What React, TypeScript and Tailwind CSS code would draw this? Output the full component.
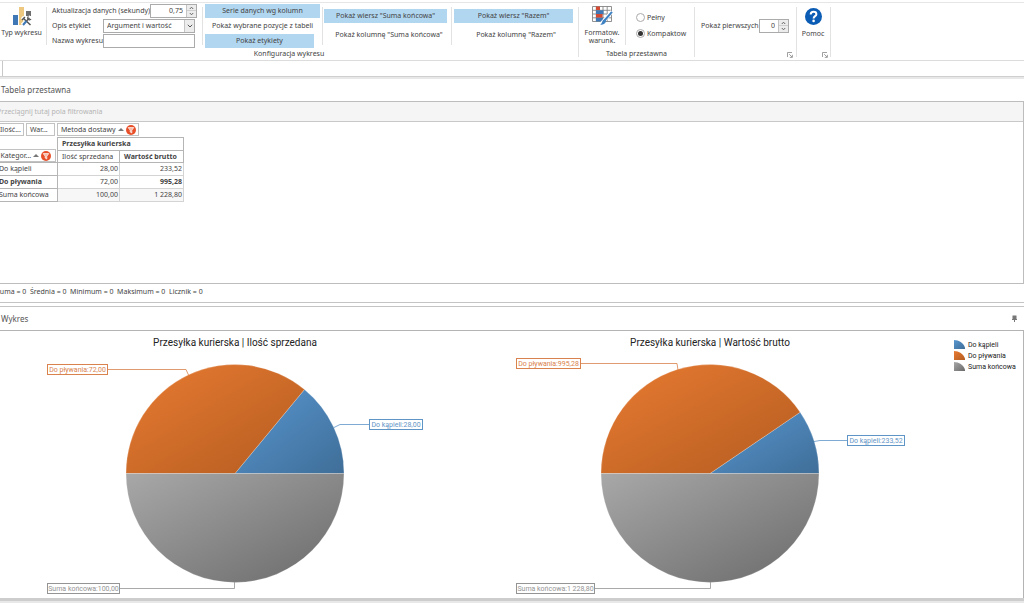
import { ReactNode, useState } from "react";

type Slice = { name: string; value: number; fill: string };

type Callout = {
  text: string;
  color: string;
  x: number;
  y: number;
  width: number;
  leader: string;
};

const FILLS = {
  blue: { from: "#5896d0", to: "#3f6e98" },
  orange: { from: "#e87b32", to: "#b45c20" },
  gray: { from: "#a8a8a8", to: "#6a6a6a" },
};

const LEGEND = [
  { name: "Do kąpieli", fill: "blue" },
  { name: "Do pływania", fill: "orange" },
  { name: "Suma końcowa", fill: "gray" },
];

const ROWS = [
  { name: "Do kąpieli", count: "28,00", gross: "233,52" },
  { name: "Do pływania", count: "72,00", gross: "995,28", bold: true },
  { name: "Suma końcowa", count: "100,00", gross: "1 228,80", total: true },
];

const COUNT_SLICES: Slice[] = [
  { name: "kapiel", value: 28, fill: "blue" },
  { name: "plywanie", value: 72, fill: "orange" },
  { name: "suma", value: 100, fill: "gray" },
];

const GROSS_SLICES: Slice[] = [
  { name: "kapiel", value: 233.52, fill: "blue" },
  { name: "plywanie", value: 995.28, fill: "orange" },
  { name: "suma", value: 1228.8, fill: "gray" },
];

const COUNT_CALLOUTS: Callout[] = [
  { text: "Do pływania:72,00", color: "#d9824e", x: 47, y: 10, width: 61, leader: "M108 15.5H186L188.5 21" },
  { text: "Do kąpieli:28,00", color: "#5f95c6", x: 369, y: 65, width: 54, leader: "M334 73.5L340 70.5H369" },
  { text: "Suma końcowa:100,00", color: "#949494", x: 47, y: 229, width: 73, leader: "M120 234.5H234.5V228" },
];

const GROSS_CALLOUTS: Callout[] = [
  { text: "Do pływania:995,28", color: "#d9824e", x: 41, y: 4, width: 65, leader: "M106 9.5H202L203 16" },
  { text: "Do kąpieli:233,52", color: "#5f95c6", x: 372, y: 81, width: 58, leader: "M339 87.5L345 86.5H372" },
  { text: "Suma końcowa:1 228,80", color: "#949494", x: 41, y: 229, width: 79, leader: "M120 234.5H235.5V228" },
];

function Divider({ tall }: { tall?: boolean }) {
  return <div className={`w-px shrink-0 bg-[#e2e2e2] ${tall ? "mt-[4px] h-[50px]" : "mt-[4px] h-[38px]"}`} />;
}

function Toggle({ children, on, className }: { children: ReactNode; on?: boolean; className?: string }) {
  const [pressed, setPressed] = useState(!!on);
  return (
    <button
      type="button"
      aria-pressed={pressed}
      onClick={() => setPressed(!pressed)}
      className={`h-[14px] whitespace-nowrap ${pressed ? "bg-[#b1d6f0]" : ""} ${className ?? ""}`}
    >
      {children}
    </button>
  );
}

function Spinner({ id, value, className }: { id: string; value: string; className: string }) {
  return (
    <div className={`flex h-[14px] border border-[#ababab] ${className}`}>
      <input id={id} defaultValue={value} className="w-full min-w-0 pr-[3px] text-right outline-none" />
      <div className="flex w-[10px] shrink-0 flex-col divide-y divide-[#cfcfcf] border-l border-[#c4c4c4] bg-[#ececec]">
        <button type="button" aria-label="Zwiększ" className="flex h-[6px] items-center justify-center">
          <svg width="5" height="4" viewBox="0 0 5 4" fill="none" stroke="#666">
            <path d="M.8 3L2.5 1.2L4.2 3" />
          </svg>
        </button>
        <button type="button" aria-label="Zmniejsz" className="flex h-[6px] items-center justify-center">
          <svg width="5" height="4" viewBox="0 0 5 4" fill="none" stroke="#666">
            <path d="M.8 1L2.5 2.8L4.2 1" />
          </svg>
        </button>
      </div>
    </div>
  );
}

function Launcher() {
  return (
    <button type="button" aria-label="Więcej opcji" className="h-[6px] w-[6px]">
      <svg width="6" height="6" viewBox="0 0 6 6" fill="none" stroke="#888" strokeWidth=".8">
        <path d="M.5 5V.5H5M2.2 2.2L5 5M5.4 2.8V5.4H2.8" />
      </svg>
    </button>
  );
}

function ChartTypeIcon() {
  return (
    <svg width="20" height="20" viewBox="0 0 20 20">
      <path fill="#3f78b5" d="M0 8h5v10H0z" />
      <path fill="#edc87e" d="M6 0h5v18H6z" />
      <path fill="#6d6d6d" d="M13 4h5v5h-5z" />
      <path stroke="#fff" strokeWidth="3.4" d="M9 10l9 8.5M17.5 9.5L9 18" />
      <path stroke="#555" strokeWidth="1.5" d="M10 11l7.5 7" />
      <path stroke="#3f78b5" strokeWidth="2" d="M13.5 14L10 18" />
      <path stroke="#555" strokeWidth="1.4" d="M13.5 14l3-3" />
      <path fill="none" stroke="#555" strokeWidth="1.3" d="M15.5 9.5a1.8 1.8 0 1 0 2.5 2.5M9 13l3-3" />
    </svg>
  );
}

function FormattingIcon() {
  return (
    <svg width="21" height="20" viewBox="0 0 21 20">
      <path fill="#fff" stroke="#858585" strokeWidth=".9" d="M.5 .5h19v15H.5zM.5 4.3h19M.5 8h19M.5 11.8h19M4.3 .5v15M11 .5v15M15.2 .5v15" />
      <path fill="#d24a32" d="M4 .5h4v3.7H4zM4 8h6.5v3.7H4z" />
      <path fill="#3f78b5" d="M4 4.2h7.5V8H4zM4 11.800h7v3.7H4z" />
      <path stroke="#fff" strokeWidth="3.6" d="M20 5.5L10 17" />
      <path stroke="#3f82c4" strokeWidth="2" d="M20 5.8L12.5 14.5" />
      <path fill="#3f82c4" d="M12.8 13.5c-1.6.2-2.4 1.2-2.7 2.6-.2 1.2-1 2-2.1 2.5 2.8.5 5.5-.7 6.3-3.6z" />
    </svg>
  );
}

function HelpIcon() {
  return (
    <svg width="17" height="17" viewBox="0 0 17 17">
      <circle cx="8.5" cy="8.5" r="8.5" fill="#0b5cb4" />
      <path d="M5.7 6.4c0-3.5 5.7-3.3 5.7-.2 0 1.9-2.8 2-2.8 4.2" fill="none" stroke="#fff" strokeWidth="2" />
      <circle cx="8.6" cy="12.9" r="1.3" fill="#fff" />
    </svg>
  );
}

function SortFilter() {
  return (
    <>
      <svg width="6" height="3" viewBox="0 0 6 3" className="shrink-0">
        <path d="M3 0L6 3H0z" fill="#777" />
      </svg>
      <svg width="10" height="10" viewBox="0 0 10 10" className="shrink-0">
        <circle cx="5" cy="5" r="5" fill="#e8502a" />
        <path d="M2.2 2.6h5.6L5.8 5.2V8L4.2 7V5.2z" fill="#f6b9a6" stroke="#fff" strokeWidth=".7" />
      </svg>
    </>
  );
}

function Field({ children, className }: { children: ReactNode; className: string }) {
  return (
    <button
      type="button"
      className={`flex h-[13px] items-center gap-[2px] whitespace-nowrap border border-[#c2c2c2] bg-white ${className}`}
    >
      {children}
    </button>
  );
}

function Choice({ label, checked }: { label: string; checked?: boolean }) {
  return (
    <label className="flex h-[9px] items-center gap-[2px]">
      <input
        type="radio"
        name="layout"
        defaultChecked={checked}
        className="h-[9px] w-[9px] appearance-none rounded-full border border-[#aaa] bg-white bg-clip-content p-[1px] checked:bg-[#333]"
      />
      {label}
    </label>
  );
}

function Ribbon() {
  return (
    <header className="flex h-[61px] overflow-hidden border-b border-[#dcdcdc]">
      <div className="mt-[2px] flex w-full border-t border-[#e6e6e6]">
        <section aria-labelledby="cfg" className="flex w-[578px] shrink-0 flex-col">
          <div className="flex h-[46px]">
            <button type="button" className="flex w-[46px] flex-col items-center pt-[4px]">
              <ChartTypeIcon />
              <span className="-ml-[3px] whitespace-nowrap leading-[12px]">Typ wykresu</span>
            </button>
            <Divider />
            <div className="flex w-[155px] flex-col gap-px pl-[5px] pt-px">
              <div className="flex items-center justify-between pr-[5px]">
                <label htmlFor="refresh" className="whitespace-nowrap">Aktualizacja danych (sekundy)</label>
                <Spinner id="refresh" value="0,75" className="w-[47px]" />
              </div>
              <div className="flex items-center justify-between pr-[7px]">
                <label htmlFor="caption">Opis etykiet</label>
                <div className="relative w-[92px]">
                  <select id="caption" className="block h-[14px] w-full appearance-none border border-[#ababab] bg-white pl-[3px]">
                    <option>Argument i wartość</option>
                  </select>
                  <div className="pointer-events-none absolute inset-y-px right-px flex w-[10px] items-center justify-center border-l border-[#c4c4c4] bg-[#ececec]">
                    <svg width="6" height="4" viewBox="0 0 6 4" fill="none" stroke="#555">
                      <path d="M.8 .8L3 3L5.2 .8" />
                    </svg>
                  </div>
                </div>
              </div>
              <div className="flex items-center justify-between pr-[7px]">
                <label htmlFor="name" className="whitespace-nowrap">Nazwa wykresu</label>
                <input id="name" className="h-[14px] w-[92px] border border-[#ababab] px-1 outline-none" />
              </div>
            </div>
            <Divider />
            <div className="flex w-[119px] flex-col items-start gap-px pl-[2px] pt-px">
              <Toggle on className="w-[115px]">Serie danych wg kolumn</Toggle>
              <Toggle className="w-[115px]">Pokaż wybrane pozycje z tabeli</Toggle>
              <Toggle on className="w-[109px]">Pokaż etykiety</Toggle>
            </div>
            <Divider />
            <div className="flex w-[128px] shrink-0 flex-col items-start gap-[5px] pl-px pt-[6px]">
              <Toggle on className="w-[123px]">Pokaż wiersz "Suma końcowa"</Toggle>
              <Toggle className="w-[127px] pl-[3px]">Pokaż kolumnę "Suma końcowa"</Toggle>
            </div>
            <Divider />
            <div className="flex flex-1 flex-col items-start gap-[5px] pl-[2px] pt-[6px]">
              <Toggle on className="w-[119px]">Pokaż wiersz "Razem"</Toggle>
              <Toggle className="w-[123px] pl-px">Pokaż kolumnę "Razem"</Toggle>
            </div>
          </div>
          <h2 id="cfg" className="text-center leading-[12px]">Konfiguracja wykresu</h2>
        </section>
        <Divider tall />

        <section aria-labelledby="pivot-group" className="flex w-[115px] shrink-0 flex-col">
          <div className="flex h-[46px]">
            <button type="button" className="flex w-[46px] flex-col items-center pt-[3px] leading-[8px]">
              <FormattingIcon />
              <span className="pt-[3px]">Formatow.<br />warunk.</span>
            </button>
            <Divider />
            <div className="flex flex-col gap-[7px] pl-[10px] pt-[10px]">
              <Choice label="Pełny" />
              <Choice label="Kompaktow" checked />
            </div>
          </div>
          <h2 id="pivot-group" className="text-center leading-[12px]">Tabela przestawna</h2>
        </section>
        <Divider tall />

        <section className="flex w-[101px] shrink-0 flex-col items-end justify-between pb-[2px] pl-[6px] pr-[3px] pt-[16px]">
          <div className="flex w-full items-center justify-between pr-[4px]">
            <label htmlFor="first" className="whitespace-nowrap">Pokaż pierwszych</label>
            <Spinner id="first" value="0" className="w-[32px]" />
          </div>
          <Launcher />
        </section>
        <Divider tall />

        <section className="flex w-[33px] shrink-0 flex-col items-end justify-between pb-[2px] pr-[2px] pt-[5px]">
          <button type="button" className="flex w-full flex-col items-center gap-[3px] pl-px">
            <HelpIcon />
            <span className="leading-[12px]">Pomoc</span>
          </button>
          <Launcher />
        </section>
        <Divider tall />
      </div>
    </header>
  );
}

function PivotTable() {
  const cell = "border border-[#d4d4d4] px-px py-0 text-right";
  const head = "border border-[#b5b5b5] px-[4px] py-0 text-left";
  return (
    <section>
      <h2 className="h-[22px] pl-px text-[8px] leading-[22px] text-[#555]">Tabela przestawna</h2>
      <div className="h-[183px] overflow-hidden border-y border-r border-[#bdbdbd]">
        <div className="h-[20px] border-b border-[#c8c8c8] bg-[#f5f5f5] leading-[19px] text-[#b4b4b4]">
          <span className="-ml-[3px]">Przeciągnij tutaj pola filtrowania</span>
        </div>
        <div className="-ml-[4px] mt-px flex h-[14px] gap-[2px]">
          <Field className="w-[28px] pl-[3px]">Ilość...</Field>
          <Field className="w-[29px] pl-[3px]">War...</Field>
          <Field className="w-[82px] pl-[3px]">Metoda dostawy <SortFilter /></Field>
        </div>
        <table className="-ml-[4px] w-[187px] table-fixed border-collapse">
          <colgroup>
            <col className="w-[61px]" />
            <col className="w-[62px]" />
            <col className="w-[64px]" />
          </colgroup>
          <thead>
            <tr className="h-[13px]">
              <th rowSpan={2} className="p-0 pr-px align-bottom font-normal">
                <Field className="w-full pl-[3px]">Kategor... <SortFilter /></Field>
              </th>
              <th colSpan={2} className={`${head} font-bold`}>Przesyłka kurierska</th>
            </tr>
            <tr className="h-[12px]">
              <th className={`${head} font-normal`}>Ilość sprzedana</th>
              <th className={`${head} font-bold`}>Wartość brutto</th>
            </tr>
          </thead>
          <tbody>
            {ROWS.map((row) => (
              <tr key={row.name} className={`h-[13px] ${row.total ? "bg-[#f7f7f7]" : ""}`}>
                <th className={`border border-[#b5b5b5] bg-white px-[2px] py-0 text-left ${row.bold ? "font-bold" : "font-normal"}`}>
                  {row.name}
                </th>
                <td className={cell}>{row.count}</td>
                <td className={`${cell} ${row.bold ? "font-bold" : ""}`}>{row.gross}</td>
              </tr>
            ))}
          </tbody>
        </table>
      </div>
      <p className="-ml-[4px] h-[18px] whitespace-pre leading-[16px]">
        Suma = 0  Średnia = 0  Minimum = 0  Maksimum = 0  Licznik = 0
      </p>
    </section>
  );
}

function arc(cx: number, cy: number, r: number, from: number, to: number) {
  const px = (a: number) => (cx + r * Math.cos(a)).toFixed(2);
  const py = (a: number) => (cy - r * Math.sin(a)).toFixed(2);
  return `M${cx} ${cy}L${px(from)} ${py(from)}A${r} ${r} 0 0 0 ${px(to)} ${py(to)}Z`;
}

function Pie({ title, slices, callouts }: { title: string; slices: Slice[]; callouts: Callout[] }) {
  const sum = slices.reduce((acc, s) => acc + s.value, 0);
  let angle = 0;
  return (
    <figure className="flex flex-1 flex-col items-center pr-[5px]">
      <figcaption className="h-[22px] text-[10px] leading-[22px] text-[#222]">{title}</figcaption>
      <svg width="470" height="244" viewBox="0 0 470 244" role="img" aria-label={title}>
        {slices.map((s) => {
          const start = angle;
          angle += (s.value / sum) * Math.PI * 2;
          return (
            <path
              key={s.name}
              d={arc(235, 119.5, 109, start, angle)}
              fill={`url(#${s.fill})`}
              stroke="#fff"
              strokeOpacity=".35"
              strokeWidth=".6"
            />
          );
        })}
        {callouts.map((c) => (
          <g key={c.text}>
            <path d={c.leader} fill="none" stroke={c.color} strokeOpacity=".8" />
            <rect x={c.x + 0.5} y={c.y + 0.5} width={c.width - 1} height="10" fill="#fff" stroke={c.color} />
            <text x={c.x + c.width / 2} y={c.y + 8} fill={c.color} textAnchor="middle" className="text-[7px]">
              {c.text}
            </text>
          </g>
        ))}
      </svg>
    </figure>
  );
}

function Charts() {
  return (
    <section>
      <div className="flex h-[24px] items-center justify-between border-t border-[#c4c4c4] pl-px pr-[7px]">
        <h2 className="text-[8px] text-[#555]">Wykres</h2>
        <button type="button" aria-label="Przypnij">
          <svg width="5" height="7" viewBox="0 0 5 7">
            <path fill="#777" d="M.5 .5h4v3.5H5v1H3V7H2V5H0V4h.5z" />
          </svg>
        </button>
      </div>
      <div className="flex border-r border-t border-[#b4b4b4] pt-px font-['Roboto','Noto_Sans',sans-serif]">
        <svg width="0" height="0" className="absolute" aria-hidden>
          <defs>
            {Object.entries(FILLS).map(([id, f]) => (
              <linearGradient key={id} id={id} x1="0" y1="0" x2="1" y2="1">
                <stop offset="0" stopColor={f.from} />
                <stop offset="1" stopColor={f.to} />
              </linearGradient>
            ))}
          </defs>
        </svg>
        <Pie title="Przesyłka kurierska | Ilość sprzedana" slices={COUNT_SLICES} callouts={COUNT_CALLOUTS} />
        <Pie title="Przesyłka kurierska | Wartość brutto" slices={GROSS_SLICES} callouts={GROSS_CALLOUTS} />
        <ul className="w-[73px] shrink-0 pl-[4px] pt-[7px] text-[#222]">
          {LEGEND.map((item) => (
            <li key={item.name} className="flex h-[11px] items-center gap-[3px] whitespace-nowrap">
              <svg width="11" height="9" viewBox="0 0 11 9" className="shrink-0">
                <path d="M0 0C5 0 9.5 3 11 7.5V9H0z" fill={`url(#${item.fill})`} />
              </svg>
              {item.name}
            </li>
          ))}
        </ul>
      </div>
      <div className="h-[3px] bg-[#cdcdcd]" />
      <div className="h-[2px] bg-[#e8e8e8]" />
    </section>
  );
}

export default function App() {
  return (
    <main className="overflow-hidden bg-white font-['Noto_Sans','Open_Sans',sans-serif] text-[7px] leading-[10px] text-[#444]">
      <Ribbon />
      <div className="h-[15px] pl-[2px]">
        <div className="h-full border-l border-[#c8c8c8]" />
      </div>
      <div className="h-[3px] border-t border-[#cfcfcf] bg-[#e8e8e8]" />
      <PivotTable />
      <div className="h-[4px] border-t border-[#c4c4c4]" />
      <Charts />
    </main>
  );
}
